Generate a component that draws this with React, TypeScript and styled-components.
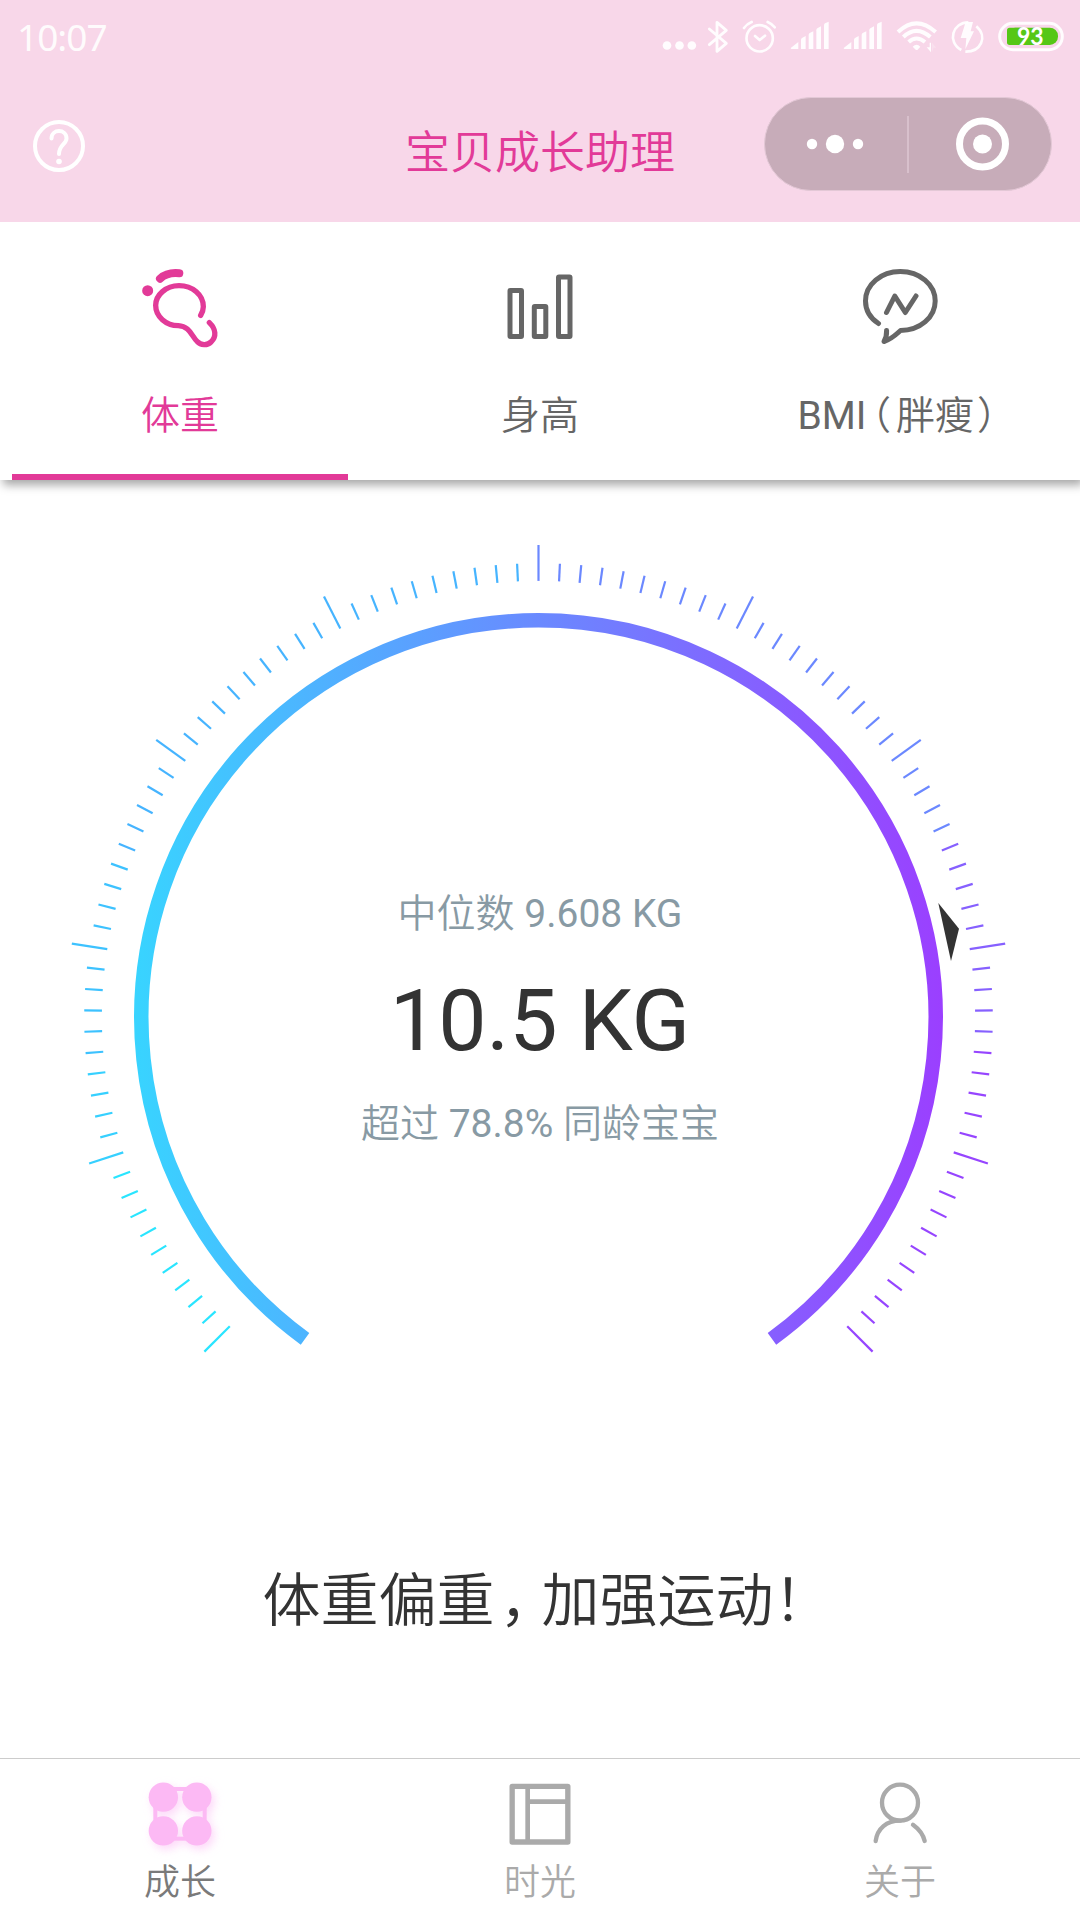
import React from "react";
import styled, { createGlobalStyle, css } from "styled-components";

const PINK = "#e23a98";

const GlobalStyle = createGlobalStyle`
  * { box-sizing: border-box; }
  body {
    margin: 0;
    background: #fff;
    font-family: Roboto, "Noto Sans CJK SC", sans-serif;
    color: #333;
  }
  svg { display: block; flex: none; overflow: visible; }
`;

const Screen = styled.div`
  width: 1080px;
  height: 1920px;
  display: flex;
  flex-direction: column;
  overflow: hidden;
  background: #fff;
`;

const cjkFace = css`
  font-family: Roboto, "Noto Sans CJK SC DemiLight", "Noto Sans CJK SC", sans-serif;
  font-weight: 350;
`;

const Cjk = styled.span`
  ${cjkFace}
`;

/* Half-width punctuation with its own side bearings. */
const Punct = styled(Cjk)<{ $before?: number; $after?: number }>`
  font-feature-settings: "halt";
  margin-left: ${(p) => p.$before ?? 0}px;
  margin-right: ${(p) => p.$after ?? 0}px;
`;

/* ---------- header ---------- */

const Header = styled.header`
  height: 222px;
  background: #f8d7e9;
  flex: none;
`;

const StatusBar = styled.div`
  height: 74px;
  padding: 0 15px 0 17px;
  display: flex;
  align-items: center;
  justify-content: space-between;
  color: rgba(255, 255, 255, 0.92);
`;

const Clock = styled.span`
  font-family: "Noto Sans", sans-serif;
  font-size: 37px;
  line-height: 74px;
  letter-spacing: -1px;
`;

const StatusIcons = styled.div`
  display: flex;
  align-items: center;
  gap: 12px;
`;

const NavBar = styled.div`
  height: 148px;
  padding: 0 28px 0 32px;
  display: grid;
  grid-template-columns: 1fr auto 1fr;
  align-items: center;
`;

const NavTitle = styled.h1`
  margin: 11px 4px 0 0;
  font-size: 45px;
  line-height: 60px;
  ${cjkFace}
  color: ${PINK};
`;

const HelpButton = styled.div`
  width: 54px;
  height: 54px;
  margin-bottom: 4px;
`;

const Capsule = styled.div`
  justify-self: end;
  width: 288px;
  height: 94px;
  margin-bottom: 8px;
  border: 1px solid #e3c8d6;
  border-radius: 47px;
  background: #c7acb9;
  display: grid;
  grid-template-columns: 1fr 2px 1fr;
  align-items: center;
  justify-items: center;
`;

const CapsuleDivider = styled.i`
  width: 2px;
  height: 57px;
  background: #d8c0cc;
`;

/* ---------- tabs ---------- */

const Tabs = styled.nav`
  height: 258px;
  flex: none;
  display: grid;
  grid-template-columns: repeat(3, 360px);
  box-shadow: 3px 5px 9px rgba(0, 0, 0, 0.35);
  clip-path: inset(0 0 -24px 0);
  background: #fff;
`;

const Tab = styled.div<{ $active?: boolean }>`
  display: flex;
  flex-direction: column;
  align-items: center;
  padding: 40px 12px 0;
  color: ${(p) => (p.$active ? PINK : "#666")};
  ${(p) =>
    p.$active &&
    css`
      background: linear-gradient(${PINK}, ${PINK}) 12px 100% / 336px 6px no-repeat;
    `}
`;

const TabLabel = styled.span`
  margin-top: 36px;
  font-size: 39px;
  line-height: 60px;
  white-space: nowrap;
`;

/* ---------- gauge ---------- */

const Body = styled.main`
  flex: 1;
  display: flex;
  flex-direction: column;
  align-items: center;
  padding-top: 50px;
`;

const Gauge = styled.section`
  display: grid;
  justify-items: center;
  > * {
    grid-area: 1 / 1;
  }
`;

const Readout = styled.div`
  display: flex;
  flex-direction: column;
  align-items: center;
  padding-top: 354px;
  white-space: nowrap;
`;

const Caption = styled.div`
  font-size: 39px;
  line-height: 60px;
  color: #889aa4;
`;

const Value = styled.div`
  margin: 22px 0 18px;
  font-size: 86px;
  line-height: 110px;
  color: #333;
`;

const Message = styled.p`
  margin: 191px 0 0;
  padding-left: 14px;
  font-size: 58px;
  line-height: 80px;
  ${cjkFace}
  color: #333;
  white-space: nowrap;
`;

/* ---------- bottom bar ---------- */

const BottomBar = styled.footer`
  height: 162px;
  flex: none;
  border-top: 1px solid #ccc;
  background: #fff;
  display: grid;
  grid-template-columns: repeat(3, 1fr);
`;

const BottomItem = styled.div<{ $active?: boolean }>`
  display: flex;
  flex-direction: column;
  align-items: center;
  padding-top: 22px;
  color: ${(p) => (p.$active ? "#7a7a7a" : "#aaa")};
`;

const BottomLabel = styled.span`
  margin-top: 11px;
  font-size: 36px;
  line-height: 50px;
  ${cjkFace}
`;

const GlowSvg = styled.svg`
  filter: drop-shadow(3px 4px 4px rgba(252, 185, 244, 0.55));
`;

/* ---------- status icons, drawn on a triple-density grid ---------- */

const StatusSvg = ({ x, w, children }: { x: number; w: number; children: React.ReactNode }) => (
  <svg width={w / 3} height={38} viewBox={`${x} 54 ${w} 114`} fill="currentColor">
    {children}
  </svg>
);

const SignalBars = () => (
  <StatusSvg x={450} w={123}>
    <path d="M453 143L475 126V147H455Q450 147 453 143Z" />
    <path d="M483 119Q483 116 486 114L497 108V147H483Z" />
    <path d="M506 104Q506 101 509 99L520 94V147H506Z" />
    <path d="M529 91Q529 87 532 85L543 79V147H529Z" />
    <path d="M552 76Q552 72 555 70L566 65V147H552Z" />
  </StatusSvg>
);

const StatusIconRow = () => (
  <StatusIcons>
    <StatusSvg x={60} w={99}>
      <circle cx="81" cy="136.5" r="13" />
      <circle cx="118.5" cy="136.5" r="13" />
      <circle cx="155.5" cy="136.5" r="13" />
    </StatusSvg>
    <StatusSvg x={195} w={72}>
      <path
        d="M208 87L259 130L231 154V67L259 91L208 134"
        fill="none"
        stroke="currentColor"
        strokeWidth="8.5"
        strokeLinecap="round"
        strokeLinejoin="round"
      />
    </StatusSvg>
    <StatusSvg x={303} w={111}>
      <g fill="none" stroke="currentColor" strokeWidth="8" strokeLinecap="round" strokeLinejoin="round">
        <circle cx="359" cy="115" r="39.5" />
        <path d="M345 108L359 120L375 107" />
        <path d="M312 84Q320 72 335 66M383 66Q397 72 404 82" />
      </g>
    </StatusSvg>
    <SignalBars />
    <SignalBars />
    <StatusSvg x={768} w={126}>
      <g fill="none" stroke="currentColor" strokeWidth="12">
        <path d="M774 96Q829 44 887 96" />
        <path d="M790 111Q829 74 871 111" />
        <path d="M806 126Q829 105 855 126" />
      </g>
      <path d="M818 140Q830 128 841 140L833 149Q830 151 827 149Z" />
      <path d="M869 128H873V157L860 142H869Z" />
      <path d="M876 157V128L889 143H881Z" opacity="0.25" />
    </StatusSvg>
    <StatusSvg x={930} w={105}>
      <g fill="none" stroke="currentColor" strokeWidth="8">
        <path d="M985 67C938 67 920 125 964 150" />
        <path d="M1009 79C1045 111 1022 156 976 155" />
      </g>
      <path d="M977 66H999L992 94H1002L976 148L979 114H962Z" />
    </StatusSvg>
    <StatusSvg x={1071} w={204}>
      <rect x="1079" y="70" width="188" height="79" rx="39.5" fill="none" stroke="currentColor" strokeWidth="9" />
      <rect x="1101" y="83" width="153" height="52" rx="25" fill="#56c716" />
      <rect x="1101" y="83" width="50" height="52" rx="8" fill="#56c716" />
      <text
        x="1171"
        y="134"
        textAnchor="middle"
        fontFamily="Lato, sans-serif"
        fontWeight="700"
        fontSize="75"
        textLength="80"
        lengthAdjust="spacingAndGlyphs"
        fill="#fff"
      >
        93
      </text>
    </StatusSvg>
  </StatusIcons>
);

/* ---------- tab icons ---------- */

const FootIcon = () => (
  <svg width="80" height="88" viewBox="420 126 240 264" fill="none" stroke="currentColor" strokeLinecap="round">
    <path
      d="M602 286Q610 272 610 260C610 225 578 197 537 197C498 197 467 225 467 256C467 290 498 317 535 317C570 319 574 348 592 365C602 376 622 377 633 366C650 350 648 327 628 308"
      strokeWidth="16"
    />
    <path d="M480 176Q502 156 538 160" strokeWidth="24" />
    <circle cx="443" cy="212" r="16.5" fill="currentColor" stroke="none" />
  </svg>
);

const BarsIcon = () => (
  <svg width="80" height="88" viewBox="500 262 80 88" fill="none" stroke="currentColor" strokeWidth="5">
    <rect x="510" y="290.5" width="11.5" height="46" rx="0.5" />
    <rect x="534.3" y="306.5" width="11.5" height="30" rx="0.5" />
    <rect x="558.5" y="277" width="11.5" height="59.5" rx="0.5" />
  </svg>
);

const BubbleIcon = () => (
  <svg
    width="80"
    height="88"
    viewBox="860 262 80 88"
    fill="none"
    stroke="currentColor"
    strokeWidth="5"
    strokeLinecap="round"
    strokeLinejoin="round"
  >
    <path d="M878.5 323.5C870 318 865.5 310 865.5 301C865.5 284.5 881 271.5 900.3 271.5C919.7 271.5 935.2 284.5 935.2 301C935.2 317.5 919.7 330.5 900.5 330.5C896 334.5 892 339 884 341.5C886 338 886.8 335 886.6 330.5" />
    <path d="M886.5 312.5L894.8 296L905.3 312.5L916 296" />
  </svg>
);

/* ---------- bottom icons ---------- */

const CloverIcon = () => (
  <GlowSvg width="66" height="66" viewBox="141 123 198 198" fill="#fcb9f4">
    <rect x="166" y="147" width="148" height="149" fill="none" stroke="#fcb9f4" strokeWidth="12" />
    <circle cx="190" cy="171.5" r="44" />
    <circle cx="290.5" cy="171.5" r="44" />
    <circle cx="190" cy="272.5" r="44" />
    <circle cx="290.5" cy="272.5" r="44" />
  </GlowSvg>
);

const FrameIcon = () => (
  <svg width="66" height="66" viewBox="1221 123 198 198" fill="none" stroke="currentColor" strokeLinejoin="round">
    <rect x="1236.5" y="139" width="167" height="167" strokeWidth="16" />
    <path d="M1283 139V306M1283 185H1403" strokeWidth="14" />
  </svg>
);

const PersonIcon = () => (
  <svg width="66" height="66" viewBox="261 123 198 198" fill="none" stroke="currentColor" strokeWidth="13" strokeLinecap="round">
    <circle cx="360" cy="188" r="54" />
    <path d="M287 303C292 265 320 242 360 242M399 254Q428 275 434 303" />
  </svg>
);

/* ---------- gauge drawing ---------- */

const CX = 538.5;
const CY = 1017.5;
const at = (deg: number, r: number) => {
  const a = (deg * Math.PI) / 180;
  return [CX + r * Math.sin(a), CY - r * Math.cos(a)];
};
const tickColor = (k: number) => {
  if (k < 10) return "#29e5ff";
  if (k < 15) return "#36d0ff";
  if (k < 25) return "#3dc2ff";
  if (k < 50) return "#46b4ff";
  if (k < 75) return "#6b88ff";
  if (k < 85) return "#8660ff";
  return "#9645ff";
};

const Dial = () => {
  const [x1, y1] = at(-144, 397.2);
  const [x2, y2] = at(144, 397.2);
  return (
    <svg width="964" height="840" viewBox="58 530 964 840" fill="none">
      <defs>
        <linearGradient id="ring" gradientUnits="userSpaceOnUse" x1="134" x2="943" y1="0" y2="0">
          <stop offset="0" stopColor="#38d4ff" />
          <stop offset="1" stopColor="#9b3fff" />
        </linearGradient>
      </defs>
      <path d={`M${x1} ${y1}A397.2 397.2 0 1 1 ${x2} ${y2}`} stroke="url(#ring)" strokeWidth="14.5" />
      {Array.from({ length: 101 }, (_, k) => {
        const deg = -135 + k * 2.7;
        const [ax, ay] = at(deg, 436.6);
        const [bx, by] = at(deg, k % 10 === 0 ? 472.5 : 454.3);
        return <line key={k} x1={ax} y1={ay} x2={bx} y2={by} stroke={tickColor(k)} strokeWidth="2.2" />;
      })}
      <path d="M938.3 903L959 928.7L951 961Z" fill="#333" />
    </svg>
  );
};

export default function App() {
  return (
    <Screen lang="zh-CN">
      <GlobalStyle />
      <Header>
        <StatusBar>
          <Clock>10:07</Clock>
          <StatusIconRow />
        </StatusBar>
        <NavBar>
          <HelpButton>
            <svg width="54" height="54" viewBox="0 0 54 54" fill="none" stroke="#fff" strokeWidth="4" strokeLinecap="round">
              <circle cx="27" cy="27" r="24" />
              <path d="M19.5 19.5C19.5 9.5 34.5 9.5 34.5 19.5C34.5 25 27 26 27 35" />
              <circle cx="27" cy="42.5" r="2.8" fill="#fff" stroke="none" />
            </svg>
          </HelpButton>
          <NavTitle>宝贝成长助理</NavTitle>
          <Capsule>
            <svg width="58" height="20" viewBox="0 0 58 20" fill="#fff">
              <circle cx="5" cy="10" r="5.2" />
              <circle cx="28" cy="10" r="9.2" />
              <circle cx="51" cy="10" r="5.2" />
            </svg>
            <CapsuleDivider />
            <svg width="54" height="54" viewBox="0 0 54 54">
              <circle cx="29.5" cy="27" r="23" fill="none" stroke="#fff" strokeWidth="7" />
              <circle cx="29.5" cy="27" r="9.5" fill="#fff" />
            </svg>
          </Capsule>
        </NavBar>
      </Header>

      <Tabs>
        <Tab $active>
          <FootIcon />
          <TabLabel>
            <Cjk>体重</Cjk>
          </TabLabel>
        </Tab>
        <Tab>
          <BarsIcon />
          <TabLabel>
            <Cjk>身高</Cjk>
          </TabLabel>
        </Tab>
        <Tab>
          <BubbleIcon />
          <TabLabel>
            BMI
            <Punct $before={5} $after={5}>
              （
            </Punct>
            <Cjk>胖瘦</Cjk>
            <Punct $before={3} $after={6}>
              ）
            </Punct>
          </TabLabel>
        </Tab>
      </Tabs>

      <Body>
        <Gauge>
          <Dial />
          <Readout>
            <Caption>
              <Cjk>中位数</Cjk> 9.608 KG
            </Caption>
            <Value>10.5 KG</Value>
            <Caption>
              <Cjk>超过</Cjk> 78.8% <Cjk>同龄宝宝</Cjk>
            </Caption>
          </Readout>
        </Gauge>
        <Message>
          体重偏重
          <Punct $before={5} $after={13}>
            ，
          </Punct>
          加强运动！
        </Message>
      </Body>

      <BottomBar>
        <BottomItem $active>
          <CloverIcon />
          <BottomLabel>成长</BottomLabel>
        </BottomItem>
        <BottomItem>
          <FrameIcon />
          <BottomLabel>时光</BottomLabel>
        </BottomItem>
        <BottomItem>
          <PersonIcon />
          <BottomLabel>关于</BottomLabel>
        </BottomItem>
      </BottomBar>
    </Screen>
  );
}
